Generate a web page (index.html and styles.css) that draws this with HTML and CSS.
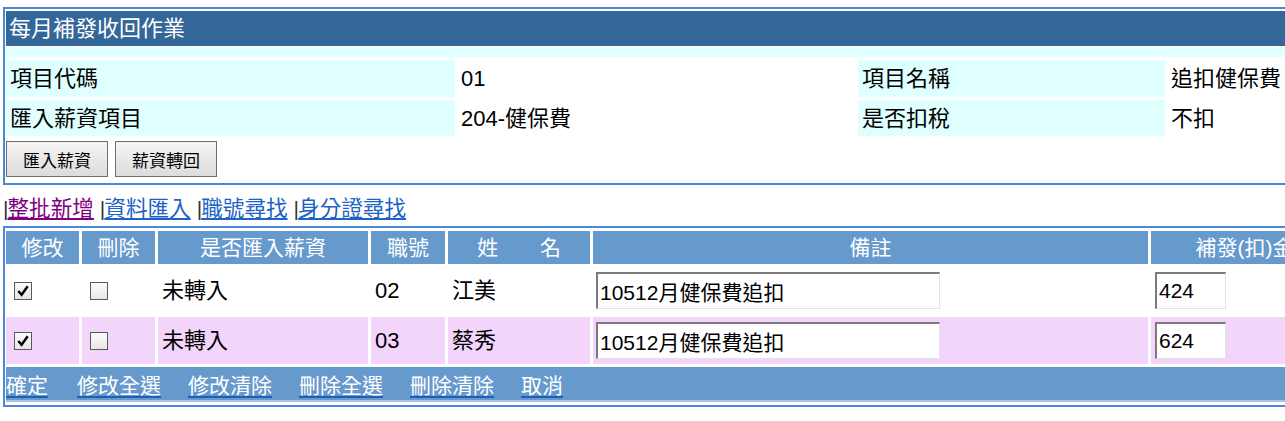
FILE: index.html
```html
<!DOCTYPE html>
<html lang="zh-Hant">
<head>
<meta charset="utf-8">
<title>每月補發收回作業</title>
<link rel="stylesheet" href="styles.css">
</head>
<body>
<div class="panel top">
  <div class="title">每月補發收回作業</div>
  <div class="band"></div>
  <div class="info">
    <div class="lbl">項目代碼</div><div class="val">01</div>
    <div class="lbl">項目名稱</div><div class="val">追扣健保費</div>
    <div class="lbl">匯入薪資項目</div><div class="val">204-健保費</div>
    <div class="lbl">是否扣稅</div><div class="val">不扣</div>
  </div>
  <div class="btns">
    <button class="btn" type="button">匯入薪資</button>
    <button class="btn" type="button">薪資轉回</button>
  </div>
</div>

<div class="links">
  <span class="sep">|</span><a class="visited" href="#">整批新增</a>
  <span class="sep">|</span><a href="#">資料匯入</a>
  <span class="sep">|</span><a href="#">職號尋找</a>
  <span class="sep">|</span><a href="#">身分證尋找</a>
</div>

<div class="panel list">
  <div class="row head">
    <div class="c">修改</div>
    <div class="c">刪除</div>
    <div class="c">是否匯入薪資</div>
    <div class="c">職號</div>
    <div class="c">姓　　名</div>
    <div class="c">備註</div>
    <div class="c">補發(扣)金額</div>
  </div>
  <div class="row data">
    <div class="c cbcell"><span class="cb"><svg viewBox="0 0 17 17" width="17" height="17"><path d="M3.5 8.5 L7 12.5 L13.5 3.5" fill="none" stroke="#000" stroke-width="2.6"/></svg></span></div>
    <div class="c cbcell"><span class="cb"></span></div>
    <div class="c">未轉入</div>
    <div class="c">02</div>
    <div class="c">江美</div>
    <div class="c"><input class="txt memo" type="text" value="10512月健保費追扣"></div>
    <div class="c"><input class="txt amt" type="text" value="424"></div>
  </div>
  <div class="row data alt">
    <div class="c cbcell"><span class="cb"><svg viewBox="0 0 17 17" width="17" height="17"><path d="M3.5 8.5 L7 12.5 L13.5 3.5" fill="none" stroke="#000" stroke-width="2.6"/></svg></span></div>
    <div class="c cbcell"><span class="cb"></span></div>
    <div class="c">未轉入</div>
    <div class="c">03</div>
    <div class="c">蔡秀</div>
    <div class="c"><input class="txt memo" type="text" value="10512月健保費追扣"></div>
    <div class="c"><input class="txt amt" type="text" value="624"></div>
  </div>
  <div class="foot">
    <a href="#" class="first">確定</a>
    <a href="#">修改全選</a>
    <a href="#">修改清除</a>
    <a href="#">刪除全選</a>
    <a href="#">刪除清除</a>
    <a href="#">取消</a>
  </div>
</div>
</body>
</html>
```

FILE: styles.css
```css
html {
  overflow: hidden;
  background: #fff;
}
body {
  margin: 0;
  font-family: "Liberation Sans", "Noto Sans CJK TC", sans-serif;
  font-size: 22px;
  color: #000;
  width: 1400px;
}
.panel {
  width: 1353px;
  border: 2px solid #4a89d8;
  padding: 2px 1px;
  margin-left: 3px;
  background: #fff;
}
.top {
  margin-top: 7px;
  padding-bottom: 0;
}
.title {
  height: 35px;
  line-height: 35px;
  background: #336699;
  color: #fff;
  padding-left: 3px;
  font-size: 22px;
}
.band {
  height: 10px;
  margin-top: 1px;
  background: #e0ffff;
}
.info {
  display: grid;
  grid-template-columns: 449px 397px 307px 191px;
  grid-auto-rows: 37px 36px;
  gap: 3px;
  margin-top: 3px;
}
.lbl {
  background: #e0ffff;
  padding-left: 4px;
  line-height: 37px;
  white-space: nowrap;
}
.val {
  padding-left: 3px;
  line-height: 37px;
  white-space: nowrap;
}
.btns {
  display: flex;
  gap: 7px;
  padding: 5px 0 6px;
}
.btn {
  width: 102px;
  height: 36px;
  border: 1px solid #707070;
  background: linear-gradient(#f5f5f5, #dcdcdc);
  font-family: "Noto Sans CJK TC", sans-serif;
  font-size: 17px;
  color: #000;
  padding: 0;
}
.links {
  margin: 11px 0 0 3px;
  height: 26px;
  line-height: 26px;
  font-size: 21.6px;
  white-space: nowrap;
}
.links .sep {
  color: #333;
  font-family: "Liberation Sans Narrow", "Liberation Sans", sans-serif;
  font-size: 21px;
  margin-right: -1px;
}
.links a {
  color: #1d62c4;
  text-decoration: underline;
  text-underline-offset: 2px;
}
.links a.visited {
  color: #800080;
}
.list {
  margin-top: 4px;
  padding: 3px 1px 3px;
  display: flex;
  flex-direction: column;
  gap: 3px;
}
.row {
  display: grid;
  grid-template-columns: 73px 73px 210px 74px 142px 555px 208px;
  gap: 3px;
}
.head {
  height: 33px;
}
.head .c {
  background: #6699cc;
  color: #fff;
  font-size: 21px;
  text-align: center;
  line-height: 33px;
  white-space: nowrap;
  overflow: hidden;
}
.data {
  height: 47px;
}
.data .c {
  display: flex;
  align-items: center;
  padding-left: 4px;
  line-height: 26px;
  white-space: nowrap;
}
.data.alt .c {
  background: #f3d5fb;
}
.data .cbcell {
  padding-left: 8px;
}
.cb {
  width: 18px;
  height: 18px;
  box-sizing: border-box;
  border: 1px solid #5a5a5a;
  background: linear-gradient(#fdfdfd, #e6e6e6);
  display: inline-flex;
  align-items: center;
  justify-content: center;
}
.cb svg {
  display: block;
  width: 16px;
  height: 16px;
}
.txt {
  box-sizing: border-box;
  height: 37px;
  border-style: solid;
  border-width: 2px 1px 1px 2px;
  border-color: #7b7b7b #e3e3e3 #e3e3e3 #7b7b7b;
  background: #fff;
  font-family: "Liberation Sans", "Noto Sans CJK TC", sans-serif;
  font-size: 21px;
  color: #000;
  padding: 0 2px;
  margin: 0;
}
.memo {
  width: 344px;
  margin-left: -1px;
}
.amt {
  width: 71px;
}
.foot {
  height: 33px;
  background: #6699cc;
  border-bottom: 2px solid #a9c6e6;
  display: flex;
  align-items: center;
  gap: 27px;
  font-size: 21px;
  white-space: nowrap;
}
.foot a {
  color: #fff;
  text-decoration: underline;
  text-decoration-color: #1d5fb8;
  text-decoration-thickness: 2px;
  text-underline-offset: 3px;
}
.foot a.first {
  margin-right: 2px;
}
```
